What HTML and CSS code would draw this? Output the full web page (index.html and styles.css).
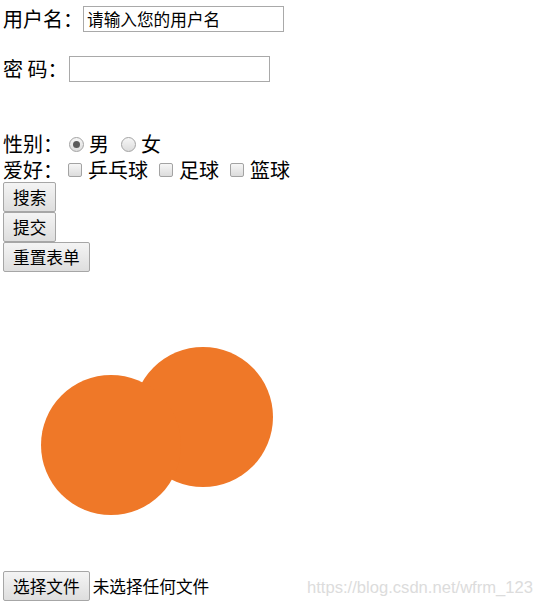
FILE: index.html
```html
<!DOCTYPE html>
<html lang="zh-CN">
<head>
<meta charset="utf-8">
<title>表单</title>
<link rel="stylesheet" href="styles.css">
</head>
<body>
<form class="page">
  <div class="row row-user">
    <span class="lbl">用户名：</span>
    <input class="text-input" type="text" value="请输入您的用户名">
  </div>
  <div class="row row-pwd">
    <span class="lbl lbl-pwd">密 码：</span>
    <input class="text-input" type="password">
  </div>
  <div class="row row-sex">
    <span class="lbl">性别：</span>
    <input class="radio first" type="radio" name="sex" checked>
    <span class="opt">男</span>
    <input class="radio next" type="radio" name="sex">
    <span class="opt">女</span>
  </div>
  <div class="row row-hobby">
    <span class="lbl">爱好：</span>
    <input class="check first" type="checkbox">
    <span class="opt">乒乓球</span>
    <input class="check next" type="checkbox">
    <span class="opt">足球</span>
    <input class="check next" type="checkbox">
    <span class="opt">篮球</span>
  </div>
  <button class="btn" type="button">搜索</button>
  <button class="btn" type="submit">提交</button>
  <button class="btn" type="reset">重置表单</button>
  <svg class="art" width="300" height="299" viewBox="0 0 300 299" aria-hidden="true">
    <circle cx="200" cy="145" r="70" fill="#ef7828"/>
    <circle cx="108" cy="173" r="70" fill="#ef7828"/>
  </svg>
  <div class="row row-file">
    <span class="btn file-btn">选择文件</span>
    <span class="file-text">未选择任何文件</span>
  </div>
</form>
<div class="watermark">https://blog.csdn.net/wfrm_123</div>
</body>
</html>
```

FILE: styles.css
```css
html, body {
  margin: 0;
  padding: 0;
  background: #ffffff;
}

body {
  font-family: "Noto Sans CJK SC", "Microsoft YaHei", sans-serif;
  font-size: 20px;
  color: #000;
  position: relative;
  width: 541px;
  height: 610px;
  overflow: hidden;
}

.page {
  display: flex;
  flex-direction: column;
  align-items: flex-start;
  padding: 6px 0 0 3px;
  margin: 0;
}

.row {
  display: flex;
  align-items: center;
  line-height: 1;
  white-space: nowrap;
}

.lbl {
  display: inline-block;
}

.lbl-pwd {
  width: 66px;
}

.row-user,
.row-pwd {
  height: 26px;
}

.row-pwd {
  margin-top: 24px;
}

.row-sex {
  margin-top: 49px;
  height: 26px;
}

.row-hobby {
  height: 25px;
}

.text-input {
  box-sizing: border-box;
  width: 201px;
  height: 26px;
  margin: 0;
  padding: 0 3px;
  border: 1px solid #a9a9a9;
  border-radius: 0;
  font-family: "Noto Sans CJK SC", sans-serif;
  font-size: 16.67px;
  color: #000;
  background: #fff;
  outline: none;
}

.radio,
.check {
  -webkit-appearance: none;
  appearance: none;
  margin: 0;
  box-sizing: border-box;
  border: 1px solid #a3a3a3;
  background: linear-gradient(#f6f6f6, #dcdcdc);
  position: relative;
  flex: none;
}

.radio {
  width: 15px;
  height: 15px;
  border-radius: 50%;
  margin-right: 5px;
}

.radio.first {
  margin-left: 6px;
}

.radio.next {
  margin-left: 12px;
}

.radio:checked::after {
  content: "";
  position: absolute;
  left: 3px;
  top: 3px;
  width: 7px;
  height: 7px;
  border-radius: 50%;
  background: #5a5a5a;
}

.check {
  width: 14px;
  height: 14px;
  border-radius: 2px;
  margin-right: 6px;
}

.check.first {
  margin-left: 5px;
}

.check.next {
  margin-left: 11px;
}

.btn {
  box-sizing: border-box;
  display: flex;
  align-items: center;
  justify-content: center;
  height: 30px;
  margin: 0;
  padding: 0 9px;
  border: 1px solid #a6a6a6;
  border-radius: 2px;
  background: linear-gradient(#f4f4f4, #dedede);
  font-family: "Noto Sans CJK SC", sans-serif;
  font-size: 16.67px;
  line-height: 1;
  color: #000;
}

.art {
  display: block;
  flex: none;
}

.row-file {
  height: 30px;
}

.file-text {
  margin-left: 3px;
  font-size: 16.67px;
}

.watermark {
  position: absolute;
  left: 307px;
  top: 577px;
  font-family: "Liberation Sans", Arial, sans-serif;
  font-size: 16.6px;
  line-height: 22px;
  color: #dcdcdc;
  white-space: nowrap;
}
```
